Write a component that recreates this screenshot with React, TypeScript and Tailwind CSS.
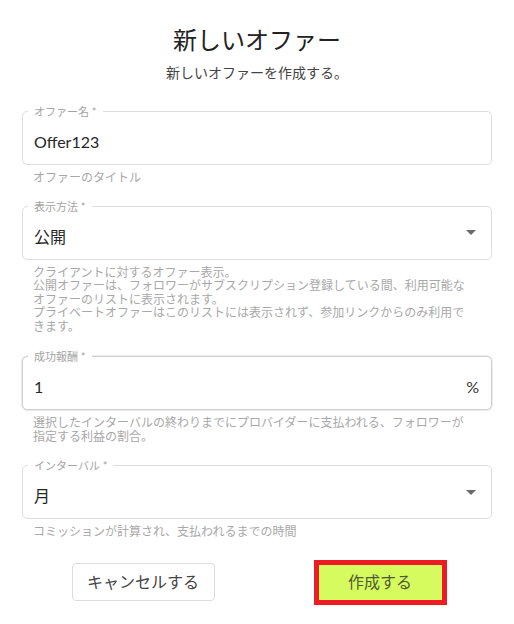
import React from "react";

const font = { fontFamily: '"Lato", "Noto Sans CJK JP", sans-serif' };

function Field({
  label,
  children,
  right,
  strong,
}: {
  label: string;
  children: React.ReactNode;
  right?: React.ReactNode;
  strong?: boolean;
}) {
  return (
    <div
      className={
        "relative flex h-[54px] items-center rounded-[5px] border pl-[11px] pr-[14px] pt-[8px] " +
        (strong ? "border-[#cfcfcf] shadow-[0_0_0_0.5px_#d8d8d8]" : "border-[#dedede]")
      }
    >
      <span className="absolute -top-[8px] left-[5px] bg-white px-[6px] text-[11px] leading-[15px] text-[#a3a3a3]">
        {label}
      </span>
      <span className="flex-1 text-[16px] leading-[20px] text-[#262626]">{children}</span>
      {right}
    </div>
  );
}

function Arrow() {
  return (
    <svg width="10" height="5" viewBox="0 0 10 5" className="mb-[8px] mr-px">
      <path d="M0 0 L10 0 L5 5 Z" fill="#6b6b6b" />
    </svg>
  );
}

function Helper({ children }: { children: React.ReactNode }) {
  return (
    <p className="mt-[6px] pl-[11px] pr-[22px] text-[12px] leading-[13.5px] text-[#a8a8a8]">
      {children}
    </p>
  );
}

export default function App() {
  return (
    <div className="min-h-[624px] w-[514px] bg-white" style={font}>
      <div className="px-[22px] pt-[24px]">
        <h1 className="text-center text-[24px] leading-[32px] font-normal text-[#222]">
          新しいオファー
        </h1>
        <p className="mt-[7px] text-center text-[14px] leading-[20px] text-[#444]">
          新しいオファーを作成する。
        </p>

        <div className="mt-[28px]">
          <Field label="オファー名 *">Offer123</Field>
          <Helper>オファーのタイトル</Helper>
        </div>

        <div className="mt-[21px]">
          <Field label="表示方法 *" right={<Arrow />}>
            公開
          </Field>
          <Helper>
            クライアントに対するオファー表示。
            <br />
            公開オファーは、フォロワーがサブスクリプション登録している間、利用可能なオファーのリストに表示されます。
            <br />
            プライベートオファーはこのリストには表示されず、参加リンクからのみ利用できます。
          </Helper>
        </div>

        <div className="mt-[23px]">
          <Field
            label="成功報酬 *"
            strong
            right={<span className="mr-[-2px] text-[16px] leading-[20px] text-[#333]">%</span>}
          >
            1
          </Field>
          <Helper>
            選択したインターバルの終わりまでにプロバイダーに支払われる、フォロワーが指定する利益の割合。
          </Helper>
        </div>

        <div className="mt-[22px]">
          <Field label="インターバル *" right={<Arrow />}>
            月
          </Field>
          <Helper>コミッションが計算され、支払われるまでの時間</Helper>
        </div>

        <div className="mt-[21px] flex items-center justify-center gap-[99px] pl-[4px]">
          <button className="h-[38px] w-[143px] rounded-[4px] border border-[#dcdcdc] bg-white text-[16px] text-[#444]">
            キャンセルする
          </button>
          <div className="border-[5px] border-[#ed1c24]">
            <button className="block h-[35px] w-[123px] bg-[#d5fb5f] text-[16px] text-[#505a32]">
              作成する
            </button>
          </div>
        </div>
      </div>
    </div>
  );
}
